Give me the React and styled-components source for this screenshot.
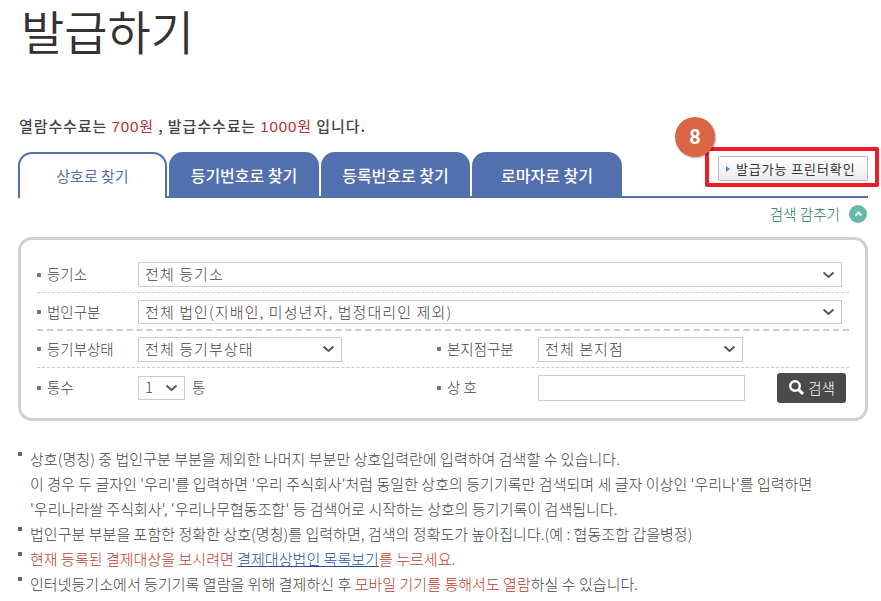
import styled, { createGlobalStyle } from "styled-components";

const KO = `"Noto Sans CJK KR", "Liberation Sans", sans-serif`;

const GlobalStyle = createGlobalStyle`
  html, body {
    margin: 0;
    padding: 0;
    background: #fff;
    overflow: hidden;
  }
  body {
    font-family: ${KO};
    color: #444;
  }
`;

const Page = styled.div`
  position: relative;
  width: 881px;
  height: 601px;
  padding: 0 13px 0 18px;
  box-sizing: border-box;
  overflow: hidden;
`;

const Title = styled.h1`
  margin: 0;
  height: 68px;
  padding-left: 3px;
  font-family: "Liberation Sans", ${KO};
  font-size: 47px;
  font-weight: 350;
  line-height: 68px;
  color: #333;
`;

const Notice = styled.p`
  margin: 48px 0 0 1px;
  height: 20px;
  font-size: 15px;
  font-weight: 500;
  letter-spacing: 0.9px;
  line-height: 20px;
  color: #444;
`;

const Price = styled.span`
  font-family: "Liberation Sans", ${KO};
  font-weight: 400;
  color: #b5302f;
`;

const TabBar = styled.div`
  display: flex;
  gap: 2px;
  width: 850px;
  height: 46px;
  margin-top: 16px;
  box-sizing: border-box;
  border-bottom: 2px solid #526fae;
`;

const Tab = styled.div`
  display: flex;
  align-items: center;
  justify-content: center;
  width: ${(p) => p.$width}px;
  height: ${(p) => (p.$active ? 46 : 44)}px;
  padding: ${(p) => (p.$active ? "0 0 2px" : "2px 0 0")};
  box-sizing: border-box;
  border-radius: 14px 14px 0 0;
  font-size: ${(p) => (p.$active ? 15 : 16)}px;
  font-weight: ${(p) => (p.$active ? 400 : 500)};
  color: ${(p) => (p.$active ? "#526fae" : "#fff")};
  background: ${(p) => (p.$active ? "#fff" : "#526fae")};
  border: ${(p) => (p.$active ? "2px solid #526fae" : "none")};
  border-bottom: none;
`;

const HideRow = styled.div`
  display: flex;
  align-items: center;
  justify-content: flex-end;
  gap: 9px;
  width: 850px;
  height: 31px;
  padding-right: 1px;
  box-sizing: border-box;
  font-size: 14.6px;
  font-weight: 300;
  color: #1f7362;
`;

const HideIcon = styled.span`
  display: flex;
  align-items: center;
  justify-content: center;
  width: 18px;
  height: 18px;
  border-radius: 50%;
  background: #65b8aa;
`;

const Panel = styled.div`
  width: 850px;
  height: 184px;
  margin-top: 8px;
  padding: 22px 16px 0 16px;
  box-sizing: border-box;
  border: 3px solid #d0d0d0;
  border-radius: 14px;
`;

const FormRow = styled.div`
  display: flex;
  align-items: center;
  height: ${(p) => p.$height}px;
  padding: ${(p) => p.$top || 0}px 7px ${(p) => p.$bottom || 0}px 0;
  border-bottom: ${(p) => p.$line || "none"};
  box-sizing: border-box;
`;

const LeftCell = styled.div`
  display: flex;
  align-items: center;
  flex: none;
  width: 400px;
`;

const FieldLabel = styled.span`
  display: flex;
  align-items: center;
  flex: none;
  gap: 6px;
  width: 101px;
  height: 24px;
  padding-bottom: 2px;
  box-sizing: border-box;
  font-size: 14.5px;
  font-weight: 300;
  color: #444;

  &::before {
    content: "";
    width: 4px;
    height: 4px;
    margin-top: 2px;
    background: #777;
  }
`;

const SelectBox = styled.div`
  display: flex;
  align-items: center;
  justify-content: space-between;
  flex: ${(p) => (p.$width ? "none" : 1)};
  width: ${(p) => (p.$width ? `${p.$width}px` : "auto")};
  height: ${(p) => p.$height || 25}px;
  padding: 0 6px 2px;
  box-sizing: border-box;
  border: 1px solid #ccc;
  font-size: 15px;
  font-weight: 300;
  letter-spacing: 1.1px;
  color: #444;
  background: #fff;

  svg {
    margin-top: 2px;
  }
`;

const TextField = styled.div`
  flex: none;
  width: 207px;
  height: 26px;
  box-sizing: border-box;
  border: 1px solid #ccc;
  background: #fff;
`;

const Unit = styled.span`
  margin: 0 0 3px 7px;
  font-size: 14.5px;
  font-weight: 300;
  color: #444;
`;

const SearchButton = styled.div`
  display: flex;
  align-items: center;
  justify-content: center;
  gap: 3px;
  flex: none;
  width: 69px;
  height: 30px;
  margin-left: 32px;
  border-radius: 3px;
  background: #4a4a4a;
  font-size: 14.5px;
  font-weight: 300;
  color: #fff;
`;

const Notes = styled.ul`
  margin: 25px 0 0;
  padding: 0;
  list-style: none;
  font-size: 15px;
  font-weight: 300;
  letter-spacing: 0.04px;
  line-height: 25px;
  color: #444;
`;

const Note = styled.li`
  position: relative;
  padding-left: 12px;
  white-space: nowrap;

  &::before {
    content: "";
    position: absolute;
    left: 0;
    top: 6px;
    width: 4px;
    height: 4px;
    background: #666;
  }
`;

const NoteLine = styled.span`
  display: block;
`;

const Red = styled.span`
  color: #bd3b26;
`;

const BlueLink = styled.a`
  color: #1f4f9c;
  text-decoration: underline;
`;

const Highlight = styled.div`
  position: absolute;
  left: 705px;
  top: 147px;
  width: 174px;
  height: 40px;
  box-sizing: border-box;
  border: 4px solid #ee1c25;
  border-radius: 2px;
  padding: 5px 7px 0 9px;
`;

const PrinterButton = styled.div`
  display: flex;
  align-items: center;
  gap: 5px;
  width: 150px;
  height: 25px;
  padding-left: 6px;
  box-sizing: border-box;
  border: 1px solid #bbb;
  border-radius: 2px;
  background: linear-gradient(#fff, #ececec);
  font-size: 13px;
  letter-spacing: 0.9px;
  color: #333;
  white-space: nowrap;
`;

const Badge = styled.div`
  position: absolute;
  left: 675px;
  top: 117px;
  display: flex;
  align-items: center;
  justify-content: center;
  width: 40px;
  height: 40px;
  border-radius: 50%;
  background: #d96545;
  box-shadow: 1px 1px 2px rgba(0, 0, 0, 0.3);
  font-family: Roboto, sans-serif;
  font-size: 20px;
  font-weight: 700;
  color: #fff;
`;

const Chevron = () => (
  <svg width="13" height="8" viewBox="0 0 13 8">
    <path d="M1.5 1.5 L6.5 6 L11.5 1.5" fill="none" stroke="#555" strokeWidth="2" />
  </svg>
);

const App = () => {
  return (
    <Page>
      <GlobalStyle />
      <Title>발급하기</Title>
      <Notice>
        열람수수료는 <Price>700원</Price> , 발급수수료는 <Price>1000원</Price> 입니다.
      </Notice>
      <TabBar>
        <Tab $active $width={149}>상호로 찾기</Tab>
        <Tab $width={150}>등기번호로 찾기</Tab>
        <Tab $width={149}>등록번호로 찾기</Tab>
        <Tab $width={150}>로마자로 찾기</Tab>
      </TabBar>
      <HideRow>
        검색 감추기
        <HideIcon>
          <svg width="9" height="6" viewBox="0 0 9 6">
            <path d="M1.5 4.5 L4.5 1.5 L7.5 4.5" fill="none" stroke="#fff" strokeWidth="1.8" />
          </svg>
        </HideIcon>
      </HideRow>
      <Panel>
        <FormRow $height={31} $bottom={5} $line="1px dashed #ccc">
          <FieldLabel>등기소</FieldLabel>
          <SelectBox>전체 등기소<Chevron /></SelectBox>
        </FormRow>
        <FormRow $height={38} $top={2} $line="2px dashed #ccc">
          <FieldLabel>법인구분</FieldLabel>
          <SelectBox $height={24}>전체 법인(지배인, 미성년자, 법정대리인 제외)<Chevron /></SelectBox>
        </FormRow>
        <FormRow $height={37} $line="1px dashed #ccc">
          <LeftCell>
            <FieldLabel>등기부상태</FieldLabel>
            <SelectBox $width={204}>전체 등기부상태<Chevron /></SelectBox>
          </LeftCell>
          <FieldLabel>본지점구분</FieldLabel>
          <SelectBox $width={205}>전체 본지점<Chevron /></SelectBox>
        </FormRow>
        <FormRow $height={39}>
          <LeftCell>
            <FieldLabel>통수</FieldLabel>
            <SelectBox $width={47} $height={24}>1<Chevron /></SelectBox>
            <Unit>통</Unit>
          </LeftCell>
          <FieldLabel>상 호</FieldLabel>
          <TextField />
          <SearchButton>
            <svg width="17" height="17" viewBox="0 0 17 17">
              <circle cx="7" cy="7" r="4.8" fill="none" stroke="#fff" strokeWidth="2.4" />
              <path d="M10.5 10.5 L15 15" stroke="#fff" strokeWidth="3" />
            </svg>
            검색
          </SearchButton>
        </FormRow>
      </Panel>
      <Notes>
        <Note>
          <NoteLine>상호(명칭) 중 법인구분 부분을 제외한 나머지 부분만 상호입력란에 입력하여 검색할 수 있습니다.</NoteLine>
          <NoteLine>이 경우 두 글자인 '우리'를 입력하면 '우리 주식회사'처럼 동일한 상호의 등기기록만 검색되며 세 글자 이상인 '우리나'를 입력하면</NoteLine>
          <NoteLine>'우리나라쌀 주식회사', '우리나무협동조합' 등 검색어로 시작하는 상호의 등기기록이 검색됩니다.</NoteLine>
        </Note>
        <Note>법인구분 부분을 포함한 정확한 상호(명칭)를 입력하면, 검색의 정확도가 높아집니다.(예 : 협동조합 갑을병정)</Note>
        <Note>
          <Red>현재 등록된 결제대상을 보시려면 <BlueLink>결제대상법인 목록보기</BlueLink>를 누르세요.</Red>
        </Note>
        <Note>
          인터넷등기소에서 등기기록 열람을 위해 결제하신 후 <Red>모바일 기기를 통해서도 열람</Red>하실 수 있습니다.
        </Note>
      </Notes>
      <Highlight>
        <PrinterButton>
          <svg width="6" height="8" viewBox="0 0 6 8">
            <path d="M1 1 L5 4 L1 7 Z" fill="#4a8cc7" />
          </svg>
          발급가능 프린터확인
        </PrinterButton>
      </Highlight>
      <Badge>8</Badge>
    </Page>
  );
};

export default App;
